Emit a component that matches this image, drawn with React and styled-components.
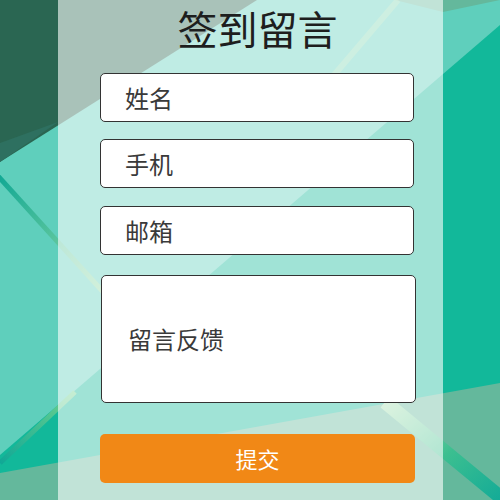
import React from "react";
import styled, { createGlobalStyle } from "styled-components";

const Global = createGlobalStyle`
  html, body { margin: 0; padding: 0; }
  body { font-family: "Noto Sans CJK SC", "Noto Sans", sans-serif; }
  * { box-sizing: border-box; }
`;

const Page = styled.div`
  position: relative;
  width: 500px;
  height: 500px;
  overflow: hidden;
`;

const Backdrop = styled.svg`
  position: absolute;
  inset: 0;
  width: 500px;
  height: 500px;
  z-index: 0;
`;

const Panel = styled.div`
  position: relative;
  z-index: 1;
  margin-left: 58px;
  width: 385px;
  height: 500px;
  padding: 8px 28px 0 42px;
  background: rgba(255, 255, 255, 0.6);
  display: flex;
  flex-direction: column;
`;

const Title = styled.h1`
  margin: 0 0 25px;
  font-size: 40px;
  line-height: 40px;
  font-weight: 400;
  color: #1e1e1e;
  text-align: center;
  letter-spacing: 0;
`;

const Field = styled.input`
  display: block;
  width: 314px;
  height: ${(p) => p.$h || 49}px;
  margin: 0 0 ${(p) => p.$gap}px;
  padding: 0 0 0 24px;
  border: 1px solid #333;
  border-radius: 5px;
  background: #fff;
  font-family: "Noto Sans CJK SC", sans-serif;
  font-size: 24px;
  color: #333;
  outline: none;
  &::placeholder { color: #3a3a3a; opacity: 1; }
`;

const Message = styled.textarea`
  display: block;
  width: 315px;
  height: 128px;
  margin: 0 0 31px 1px;
  padding: 48px 0 0 26px;
  border: 1px solid #333;
  border-radius: 5px;
  background: #fff;
  font-family: "Noto Sans CJK SC", sans-serif;
  font-size: 24px;
  line-height: 30px;
  color: #333;
  resize: none;
  outline: none;
  &::placeholder { color: #3a3a3a; opacity: 1; }
`;

const Submit = styled.button`
  display: block;
  width: 315px;
  height: 49px;
  padding: 0 0 2px;
  border: none;
  border-radius: 5px;
  background: #f18816;
  color: #fff;
  font-family: "Noto Sans CJK SC", sans-serif;
  font-size: 22px;
  cursor: pointer;
`;

function Background() {
  return (
    <Backdrop viewBox="0 0 500 500" preserveAspectRatio="none">
      <defs>
        <linearGradient id="lnA" x1="0" y1="0" x2="1" y2="1">
          <stop offset="0" stopColor="#12a894" />
          <stop offset="1" stopColor="#9ee0a6" />
        </linearGradient>
        <linearGradient id="lnB" x1="0" y1="1" x2="1" y2="0">
          <stop offset="0" stopColor="#10a896" />
          <stop offset="1" stopColor="#6fd28e" />
        </linearGradient>
        <linearGradient id="lnC" x1="0" y1="0" x2="1" y2="1">
          <stop offset="0" stopColor="#a8e0b0" />
          <stop offset="0.5" stopColor="#3cbf90" />
          <stop offset="1" stopColor="#0ea898" />
        </linearGradient>
      </defs>
      <rect x="0" y="0" width="500" height="500" fill="#12b89a" />
      <polygon points="0,0 500,0 500,25 0,455" fill="#5fcfbc" />
      <polygon points="0,0 257,0 0,162" fill="#2a6652" />
      <polygon points="0,143 58,122 0,162" fill="#2e7060" />
      <polygon points="395,0 500,0 443,12" fill="#64b89c" />
      <polygon points="0,473 500,383 500,500 0,500" fill="#64b89c" />
      <line x1="-2" y1="176" x2="115" y2="305" stroke="url(#lnA)" strokeWidth="5" />
      <line x1="0" y1="463" x2="75" y2="392" stroke="url(#lnB)" strokeWidth="5" />
      <line x1="385" y1="402" x2="510" y2="505" stroke="url(#lnC)" strokeWidth="14" />
      <line x1="398" y1="0" x2="300" y2="115" stroke="#d6eea0" strokeOpacity="0.3" strokeWidth="6" />
    </Backdrop>
  );
}

export default function App() {
  return (
    <Page>
      <Global />
      <Background />
      <Panel>
        <Title>签到留言</Title>
        <Field placeholder="姓名" $gap={17} />
        <Field placeholder="手机" $gap={18} />
        <Field placeholder="邮箱" $gap={20} />
        <Message placeholder="留言反馈" />
        <Submit type="button">提交</Submit>
      </Panel>
    </Page>
  );
}
